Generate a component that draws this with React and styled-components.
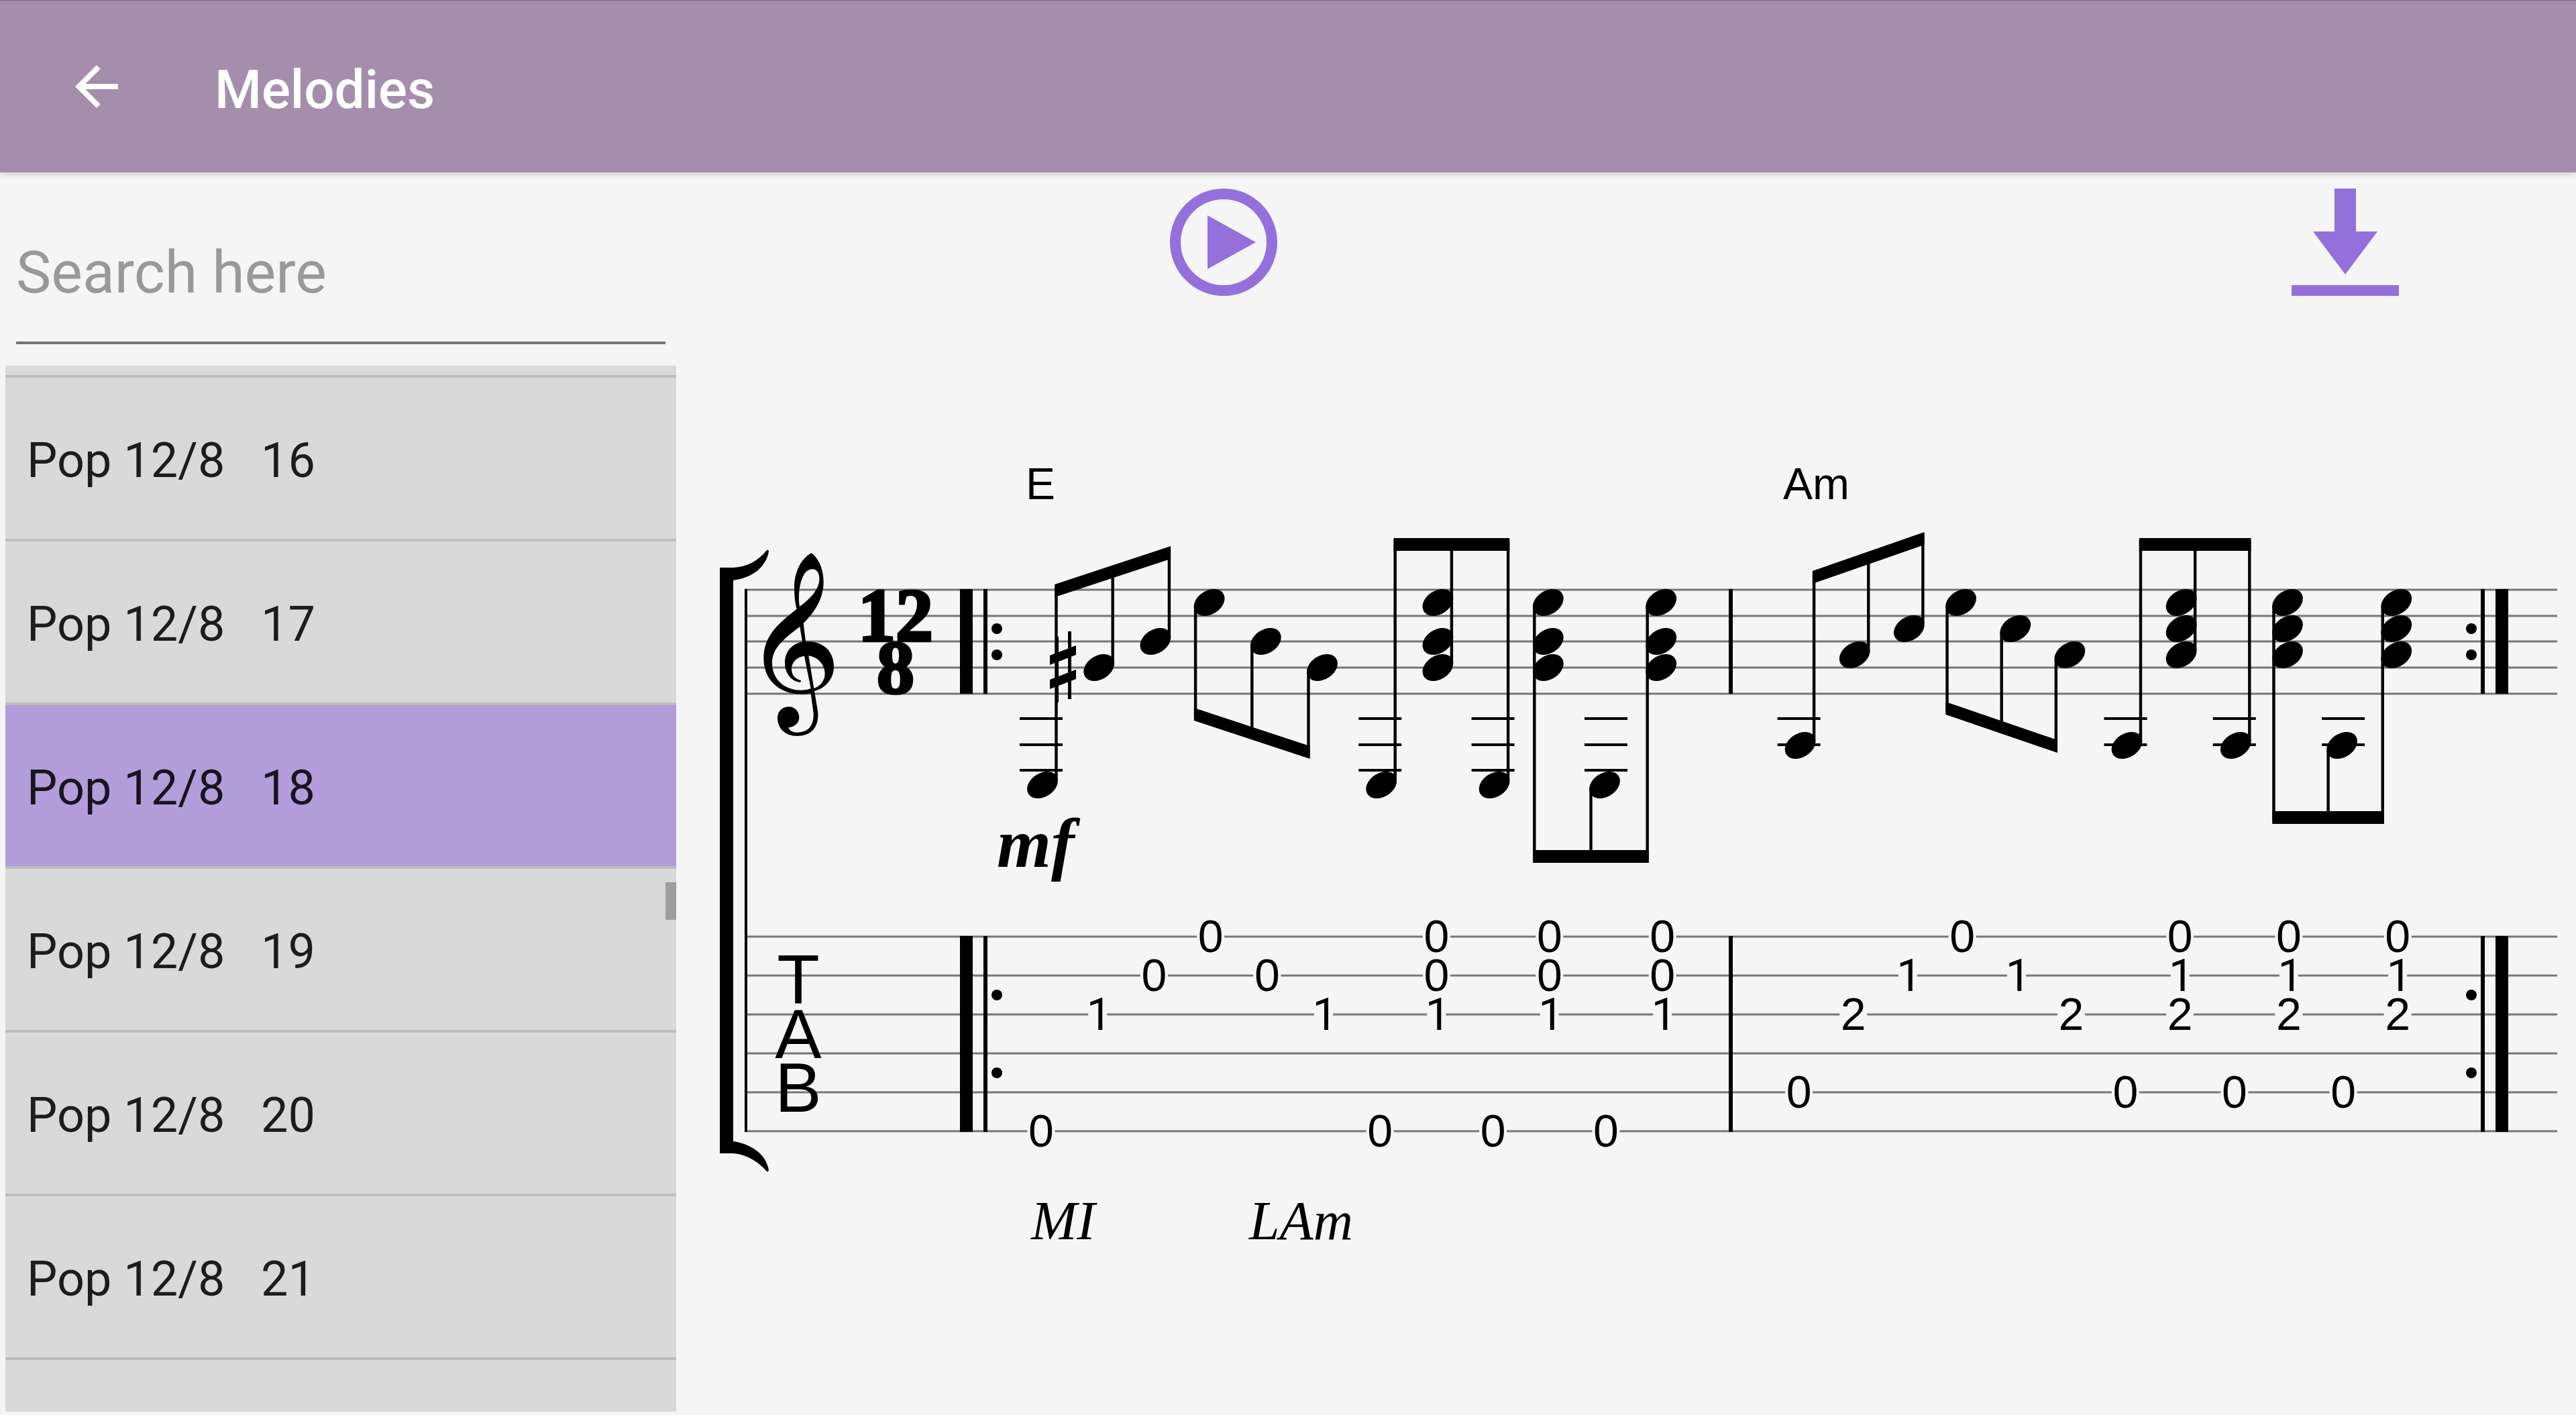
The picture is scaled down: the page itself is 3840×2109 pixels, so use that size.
import React, { useState } from 'react';
import styled, { createGlobalStyle } from 'styled-components';

const GlobalStyle = createGlobalStyle`
  * {
    box-sizing: border-box;
  }

  body {
    margin: 0;
    background: #f5f5f5;
    font-family: Roboto, sans-serif;
  }
`;

// Shell
const Page = styled.div`
  display: flex;
  flex-direction: column;
  height: 100vh;
  overflow: hidden;
`;

const AppBar = styled.header`
  display: flex;
  align-items: center;
  gap: 128px;
  height: 257px;
  flex-shrink: 0;
  padding: 0 96px;
  background: #a58dac;
  border-top: 1px solid #7b6383;
  box-shadow: 0 4px 8px rgba(0, 0, 0, 0.12);
`;

const IconButton = styled.button`
  display: flex;
  width: ${(props) => props.$size}px;
  height: ${(props) => props.$size}px;
  padding: 0;
  border: 0;
  background: none;
  color: ${(props) => props.$color};
  cursor: pointer;

  svg {
    width: 100%;
    height: 100%;
    fill: currentColor;
  }
`;

const Title = styled.h1`
  margin: 0;
  padding-top: 10px;
  color: white;
  font-size: 80px;
  font-weight: 500;
`;

const Body = styled.div`
  display: grid;
  grid-template-columns: 1008px 1fr;
  flex: 1;
  min-height: 0;
`;

// Sidebar
const Sidebar = styled.aside`
  display: flex;
  flex-direction: column;
  min-height: 0;
  padding: 48px 0 5px 8px;
`;

const SearchInput = styled.input`
  height: 208px;
  flex-shrink: 0;
  margin: 0 16px 32px;
  padding: 0 0 4px;
  border: 0;
  border-bottom: 4px solid #737373;
  outline: 0;
  background: transparent;
  color: rgba(0, 0, 0, 0.87);
  font-family: inherit;
  font-size: 88px;

  &::placeholder {
    color: #999999;
    opacity: 1;
  }
`;

const ListFrame = styled.div`
  position: relative;
  flex: 1;
  min-height: 0;
  overflow: hidden;
  background: #d9d9d9;
`;

const List = styled.ul`
  list-style: none;
  margin: 0;
  padding: 14px 0 0;
  border-bottom: 4px solid #bdbdbd;
`;

const ListItem = styled.li`
  border-top: 4px solid #bdbdbd;
`;

const ItemButton = styled.button`
  display: block;
  width: 100%;
  height: 240px;
  padding: 6px 32px 0;
  border: 0;
  background: ${(props) => (props.$active ? '#b39ddb' : 'transparent')};
  color: rgba(0, 0, 0, 0.87);
  font-family: inherit;
  font-size: 72px;
  text-align: left;
  white-space: pre;
  cursor: pointer;
`;

const ScrollThumb = styled.div`
  position: absolute;
  top: 770px;
  right: 0;
  width: 16px;
  height: 56px;
  background: #9e9e9e;
`;

// Score
const ScorePane = styled.main`
  display: flex;
  flex-direction: column;
  gap: 199px;
  padding-top: 24px;
`;

const Toolbar = styled.div`
  display: flex;
  justify-content: space-between;
  padding: 0 264px 0 736px;
`;

const Sheet = styled.div`
  padding: 0 28px 0 64px;

  svg {
    display: block;
    width: 100%;
    height: auto;
  }
`;

const ChordName = styled.text`
  font-family: 'Liberation Sans', sans-serif;
  font-size: 66px;
`;

const Fret = styled.text`
  font-family: ${(props) => (props.$one ? 'Roboto' : "'Liberation Sans'")}, sans-serif;
  font-size: ${(props) => (props.$one ? 66 : 68)}px;
  text-anchor: middle;
`;

const TabLetter = styled.text`
  font-family: 'Liberation Sans', sans-serif;
  font-size: 104px;
  text-anchor: middle;
`;

const TimeDigit = styled.text`
  font-family: 'Liberation Serif', serif;
  font-size: 112px;
  font-weight: bold;
  text-anchor: middle;
  stroke: black;
  stroke-width: 4px;
`;

const Dynamic = styled.text`
  font-family: 'Liberation Serif', serif;
  font-size: 104px;
  font-weight: bold;
  font-style: italic;
`;

const Lyric = styled.text`
  font-family: 'Liberation Serif', serif;
  font-size: 82px;
  font-style: italic;
`;

const melodies = [16, 17, 18, 19, 20, 21];

const staffLines = [879, 918, 956, 995, 1034];
const tabLines = [1396, 1454, 1512, 1570, 1628, 1686];

// Every column holds the note head heights and the [string, fret] pairs under them
const E_BASS = { heads: [1170], frets: [[5, 0]], ledgers: [1071, 1110, 1148] };
const A_BASS = { heads: [1111], frets: [[4, 0]], ledgers: [1071, 1110] };
const E_CHORD = { heads: [898, 956, 995], frets: [[0, 0], [1, 0], [2, 1]] };
const A_CHORD = { heads: [898, 937, 976], frets: [[0, 0], [1, 1], [2, 2]] };

const measures = [
  {
    start: 1552,
    step: 84.2,
    groups: [
      {
        up: true,
        beam: [871, 814],
        notes: [
          E_BASS,
          { heads: [995], frets: [[2, 1]] },
          { heads: [956], frets: [[1, 0]] },
        ],
      },
      {
        up: false,
        beam: [1074, 1131],
        notes: [
          { heads: [898], frets: [[0, 0]] },
          { heads: [956], frets: [[1, 0]] },
          { heads: [995], frets: [[2, 1]] },
        ],
      },
      { up: true, beam: [802, 802], notes: [E_BASS, E_CHORD, E_BASS] },
      { up: false, beam: [1286, 1286], notes: [E_CHORD, E_BASS, E_CHORD] },
    ],
  },
  {
    start: 2681.6,
    step: 81.15,
    groups: [
      {
        up: true,
        beam: [851, 793],
        notes: [
          A_BASS,
          { heads: [976], frets: [[2, 2]] },
          { heads: [937], frets: [[1, 1]] },
        ],
      },
      {
        up: false,
        beam: [1065, 1122],
        notes: [
          { heads: [898], frets: [[0, 0]] },
          { heads: [937], frets: [[1, 1]] },
          { heads: [976], frets: [[2, 2]] },
        ],
      },
      { up: true, beam: [802, 802], notes: [A_BASS, A_CHORD, A_BASS] },
      { up: false, beam: [1228, 1228], notes: [A_CHORD, A_BASS, A_CHORD] },
    ],
  },
];

function NoteGroup({ group, x, step }) {
  const dir = group.up ? 1 : -1;
  const stemX = (i) => x + i * step + dir * 22.5;
  const beamY = (i) => group.beam[0] + ((group.beam[1] - group.beam[0]) * i) / 2;
  const left = stemX(0) - 2.2;
  const right = stemX(2) + 2.2;
  const [y1, y2] = group.beam;

  return (
    <g>
      <polygon
        points={`${left},${y1} ${right},${y2} ${right},${y2 + dir * 19} ${left},${y1 + dir * 19}`}
      />
      {group.notes.map((note, i) => {
        const cx = x + i * step;
        const end = group.up ? Math.max(...note.heads) - 8 : Math.min(...note.heads) + 6;
        return (
          <g key={i}>
            <path
              d={`M${stemX(i)} ${beamY(i) + dir * 4}V${end}`}
              stroke="black"
              strokeWidth="4.4"
            />
            {(note.ledgers || []).map((y) => (
              <path key={y} d={`M${cx - 32} ${y}h64`} stroke="black" strokeWidth="4" />
            ))}
            {note.heads.map((y) => (
              <ellipse
                key={y}
                rx="24.8"
                ry="17.6"
                transform={`translate(${cx + dir * 2} ${y}) rotate(-33)`}
              />
            ))}
            {note.frets.map(([string, fret]) => {
              const one = fret === 1;
              const gap = one ? 28 : 41;
              return (
                <g key={string}>
                  <rect
                    x={cx - gap / 2}
                    y={tabLines[string] - 4}
                    width={gap}
                    height="8"
                    fill="#f5f5f5"
                  />
                  <Fret $one={one} x={one ? cx + 2 : cx} y={tabLines[string] + 23}>
                    {fret}
                  </Fret>
                </g>
              );
            })}
          </g>
        );
      })}
    </g>
  );
}

function Clef() {
  return (
    <path
      transform="translate(1050 780) scale(0.33333)"
      fillRule="evenodd"
      d="M478 133C507 152 533 200 533 262C533 330 500 392 443 447L453 528C540 526 579 580 579 640C579 692 547 735 492 750L508 845C512 915 475 951 415 951C360 951 327 915 327 870C327 840 350 820 377 820C405 820 424 842 424 868C424 895 402 911 376 913C380 928 395 935 415 935C465 935 490 905 488 850L476 760C460 764 435 764 415 763C330 757 265 695 265 605C265 510 320 455 413 383C405 355 402 320 402 285C403 220 430 160 478 133Z
      M426 372C418 330 425 260 445 230C460 205 480 203 492 206C510 212 516 235 514 255C510 300 470 340 426 372Z
      M427 462C350 520 303 560 303 625C303 690 350 745 430 746C450 746 465 744 476 738L447 593C410 598 390 625 390 650C390 680 408 697 432 702L430 711C395 710 360 675 360 625C360 570 395 537 438 530Z
      M466 592C510 598 539 635 539 672C539 700 522 727 490 738Z"
    />
  );
}

function Sharp() {
  return (
    <g>
      <rect x="1592" y="941" width="5" height="101" />
      <rect x="1573" y="949" width="5" height="98" />
      <polygon points="1565,977 1604,962 1604,976 1565,991" />
      <polygon points="1565,1013 1604,998 1604,1012 1565,1027" />
    </g>
  );
}

function RepeatMarks({ thick, thin, dots }) {
  return (
    <g>
      {[[878, 156], [1395, 292]].map(([y, height]) => (
        <g key={y}>
          <rect x={thick} y={y} width="19" height={height} />
          <rect x={thin} y={y} width="6" height={height} />
        </g>
      ))}
      {[937, 976, 1483, 1599].map((y) => (
        <circle key={y} cx={dots} cy={y} r="8" />
      ))}
    </g>
  );
}

function Score() {
  return (
    <svg viewBox="1072 640 2740 1240" role="img" aria-label="Pop 12/8 18">
      {[...staffLines, ...tabLines].map((y) => (
        <path key={y} d={`M1110 ${y}H3812`} stroke="#767676" strokeWidth="3" />
      ))}

      <path d="M1073 846H1093C1114 845 1130 836 1143 820Q1146 819 1146 822C1142 845 1122 861 1093 865V1701C1122 1706 1142 1721 1146 1744Q1145 1747 1143 1746C1130 1731 1114 1721 1093 1719H1073Z" />
      <rect x="1110" y="878" width="4" height="809" />
      <Clef />

      <TimeDigit x="1335" y="955">12</TimeDigit>
      <TimeDigit x="1335" y="1033">8</TimeDigit>

      <TabLetter x="1190" y="1496">T</TabLetter>
      <TabLetter x="1190" y="1577">A</TabLetter>
      <TabLetter x="1190" y="1657">B</TabLetter>

      <RepeatMarks thick={1431} thin={1466} dots={1486} />
      <rect x="2577" y="878" width="6" height="156" />
      <rect x="2577" y="1395" width="6" height="292" />
      <RepeatMarks thick={3720} thin={3698} dots={3684} />

      <ChordName x="1529" y="744">E</ChordName>
      <ChordName x="2658" y="744">Am</ChordName>

      <Sharp />
      {measures.map((measure) =>
        measure.groups.map((group, i) => (
          <NoteGroup
            key={`${measure.start}-${i}`}
            group={group}
            x={measure.start + i * 3 * measure.step}
            step={measure.step}
          />
        ))
      )}

      <Dynamic x="1486" y="1292">mf</Dynamic>
      <Lyric x="1537" y="1847">MI</Lyric>
      <Lyric x="1862" y="1847">LAm</Lyric>
    </svg>
  );
}

export default function App() {
  const [selected, setSelected] = useState(18);

  return (
    <Page>
      <GlobalStyle />
      <AppBar>
        <IconButton $size={96} $color="white" aria-label="Back">
          <svg viewBox="0 0 24 24">
            <path d="M20 11H7.83l5.59-5.59L12 4l-8 8 8 8 1.41-1.41L7.83 13H20v-2z" />
          </svg>
        </IconButton>
        <Title>Melodies</Title>
      </AppBar>
      <Body>
        <Sidebar>
          <SearchInput type="text" placeholder="Search here" aria-label="Search here" />
          <ListFrame>
            <List>
              {melodies.map((number) => (
                <ListItem key={number}>
                  <ItemButton
                    $active={number === selected}
                    onClick={() => setSelected(number)}
                  >
                    {`Pop 12/8   ${number}`}
                  </ItemButton>
                </ListItem>
              ))}
            </List>
            <ScrollThumb />
          </ListFrame>
        </Sidebar>
        <ScorePane>
          <Toolbar>
            <IconButton $size={160} $color="#9370db" aria-label="Play">
              <svg viewBox="0 0 20 20">
                <path
                  fillRule="evenodd"
                  d="M10 0a10 10 0 1 0 0 20a10 10 0 1 0 0-20zM10 2a8 8 0 1 1 0 16a8 8 0 1 1 0-16zM7 5v10l9-5z"
                />
              </svg>
            </IconButton>
            <IconButton $size={160} $color="#9370db" aria-label="Download">
              <svg viewBox="0 0 20 20">
                <path d="M8 0h4v8h4l-6 8-6-8h4zM0 18h20v2H0z" />
              </svg>
            </IconButton>
          </Toolbar>
          <Sheet>
            <Score />
          </Sheet>
        </ScorePane>
      </Body>
    </Page>
  );
}
